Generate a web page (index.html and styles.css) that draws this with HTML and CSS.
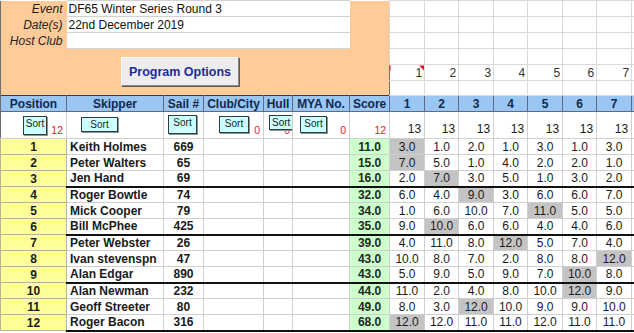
FILE: index.html
```html
<!DOCTYPE html>
<html lang="en">
<head>
    <meta charset="UTF-8">
    <meta name="viewport" content="width=device-width, initial-scale=1.0">
    <title>DF65 Winter Series Round 3 - Results</title>
    <link rel="stylesheet" href="styles.css">
</head>
<body>
    <table class="sheet">
        <colgroup>
            <col class="c-pos">
            <col class="c-skip">
            <col class="c-sail">
            <col class="c-club">
            <col class="c-hull">
            <col class="c-mya">
            <col class="c-score">
            <col class="c-r35"><col class="c-r34"><col class="c-r35"><col class="c-r34">
            <col class="c-r35"><col class="c-r34"><col class="c-r35">
            <col class="c-extra">
        </colgroup>

        <!-- event details -->
        <tr class="top">
            <td class="lbl">Event</td>
            <td class="val" colspan="5">DF65 Winter Series Round 3</td>
            <td class="org"></td>
            <td class="g"></td><td class="g"></td><td class="g"></td><td class="g"></td><td class="g"></td><td class="g"></td><td class="g"></td><td class="g"></td>
        </tr>
        <tr class="top">
            <td class="lbl">Date(s)</td>
            <td class="val" colspan="5">22nd December 2019</td>
            <td class="org"></td>
            <td class="g"></td><td class="g"></td><td class="g"></td><td class="g"></td><td class="g"></td><td class="g"></td><td class="g"></td><td class="g"></td>
        </tr>
        <tr class="top">
            <td class="lbl">Host Club</td>
            <td class="val" colspan="5"></td>
            <td class="org"></td>
            <td class="g"></td><td class="g"></td><td class="g"></td><td class="g"></td><td class="g"></td><td class="g"></td><td class="g"></td><td class="g"></td>
        </tr>
        <tr class="top">
            <td class="opts" colspan="7" rowspan="3"><button class="prog">Program Options</button></td>
            <td class="g"></td><td class="g"></td><td class="g"></td><td class="g"></td><td class="g"></td><td class="g"></td><td class="g"></td><td class="g"></td>
        </tr>
        <tr class="top">
            <td class="g num note">1</td><td class="g num">2</td><td class="g num">3</td><td class="g num">4</td><td class="g num">5</td><td class="g num">6</td><td class="g num">7</td><td class="g num"></td>
        </tr>
        <tr class="top last">
            <td class="g"></td><td class="g"></td><td class="g"></td><td class="g"></td><td class="g"></td><td class="g"></td><td class="g"></td><td class="g"></td>
        </tr>

        <!-- column headers -->
        <tr class="head">
            <th>Position</th>
            <th>Skipper</th>
            <th>Sail #</th>
            <th>Club/City</th>
            <th>Hull</th>
            <th>MYA No.</th>
            <th>Score</th>
            <th>1</th><th>2</th><th>3</th><th>4</th><th>5</th><th>6</th><th>7</th>
            <th></th>
        </tr>

        <!-- sort buttons and counts -->
        <tr class="sorts">
            <td><div class="sortbox"><span class="cnt">12</span><span class="sbtn sb-pos">Sort</span></div></td>
            <td><div class="sortbox"><span class="sbtn sb-skip">Sort</span></div></td>
            <td><div class="sortbox"><span class="sbtn sb-sail">Sort</span></div></td>
            <td><div class="sortbox"><span class="cnt">0</span><span class="sbtn sb-club">Sort</span></div></td>
            <td><div class="sortbox"><span class="cnt">0</span><span class="sbtn sb-hull">Sort</span></div></td>
            <td><div class="sortbox"><span class="cnt">0</span><span class="sbtn sb-mya">Sort</span></div></td>
            <td><div class="sortbox"><span class="cnt">12</span></div></td>
            <td class="races">13</td><td class="races">13</td><td class="races">13</td><td class="races">13</td>
            <td class="races">13</td><td class="races">13</td><td class="races">13</td>
            <td></td>
        </tr>

        <!-- results -->
        <tr>
            <td class="pos">1</td><td class="name">Keith Holmes</td><td class="sail">669</td><td></td><td></td><td></td><td class="score">11.0</td>
            <td class="d">3.0</td><td>1.0</td><td>2.0</td><td>1.0</td><td>3.0</td><td>1.0</td><td>3.0</td><td></td>
        </tr>
        <tr>
            <td class="pos">2</td><td class="name">Peter Walters</td><td class="sail">65</td><td></td><td></td><td></td><td class="score">15.0</td>
            <td class="d">7.0</td><td>5.0</td><td>1.0</td><td>4.0</td><td>2.0</td><td>2.0</td><td>1.0</td><td></td>
        </tr>
        <tr class="end">
            <td class="pos">3</td><td class="name">Jen Hand</td><td class="sail">69</td><td></td><td></td><td></td><td class="score">16.0</td>
            <td>2.0</td><td class="d">7.0</td><td>3.0</td><td>5.0</td><td>1.0</td><td>3.0</td><td>2.0</td><td></td>
        </tr>
        <tr>
            <td class="pos">4</td><td class="name">Roger Bowtle</td><td class="sail">74</td><td></td><td></td><td></td><td class="score">32.0</td>
            <td>6.0</td><td>4.0</td><td class="d">9.0</td><td>3.0</td><td>6.0</td><td>6.0</td><td>7.0</td><td></td>
        </tr>
        <tr>
            <td class="pos">5</td><td class="name">Mick Cooper</td><td class="sail">79</td><td></td><td></td><td></td><td class="score">34.0</td>
            <td>1.0</td><td>6.0</td><td>10.0</td><td>7.0</td><td class="d">11.0</td><td>5.0</td><td>5.0</td><td></td>
        </tr>
        <tr class="end">
            <td class="pos">6</td><td class="name">Bill McPhee</td><td class="sail">425</td><td></td><td></td><td></td><td class="score">35.0</td>
            <td>9.0</td><td class="d">10.0</td><td>6.0</td><td>6.0</td><td>4.0</td><td>4.0</td><td>6.0</td><td></td>
        </tr>
        <tr>
            <td class="pos">7</td><td class="name">Peter Webster</td><td class="sail">26</td><td></td><td></td><td></td><td class="score">39.0</td>
            <td>4.0</td><td>11.0</td><td>8.0</td><td class="d">12.0</td><td>5.0</td><td>7.0</td><td>4.0</td><td></td>
        </tr>
        <tr>
            <td class="pos">8</td><td class="name">Ivan stevenspn</td><td class="sail">47</td><td></td><td></td><td></td><td class="score">43.0</td>
            <td>10.0</td><td>8.0</td><td>7.0</td><td>2.0</td><td>8.0</td><td>8.0</td><td class="d">12.0</td><td></td>
        </tr>
        <tr class="end">
            <td class="pos">9</td><td class="name">Alan Edgar</td><td class="sail">890</td><td></td><td></td><td></td><td class="score">43.0</td>
            <td>5.0</td><td>9.0</td><td>5.0</td><td>9.0</td><td>7.0</td><td class="d">10.0</td><td>8.0</td><td></td>
        </tr>
        <tr>
            <td class="pos">10</td><td class="name">Alan Newman</td><td class="sail">232</td><td></td><td></td><td></td><td class="score">44.0</td>
            <td>11.0</td><td>2.0</td><td>4.0</td><td>8.0</td><td>10.0</td><td class="d">12.0</td><td>9.0</td><td></td>
        </tr>
        <tr>
            <td class="pos">11</td><td class="name">Geoff Streeter</td><td class="sail">80</td><td></td><td></td><td></td><td class="score">49.0</td>
            <td>8.0</td><td>3.0</td><td class="d">12.0</td><td>10.0</td><td>9.0</td><td>9.0</td><td>10.0</td><td></td>
        </tr>
        <tr class="end">
            <td class="pos">12</td><td class="name">Roger Bacon</td><td class="sail">316</td><td></td><td></td><td></td><td class="score">68.0</td>
            <td class="d">12.0</td><td>12.0</td><td>11.0</td><td>11.0</td><td>12.0</td><td>11.0</td><td>11.0</td><td></td>
        </tr>
    </table>
</body>
</html>
```

FILE: styles.css
```css
* {
    margin: 0;
    padding: 0;
    box-sizing: border-box;
}
body {
    overflow: hidden;
    background: #fff;
    font-family: "Liberation Sans", Arial, sans-serif;
    font-size: 12px;
    color: #1a1a1a;
}

/* spreadsheet grid */
.sheet {
    border-collapse: collapse;
    table-layout: fixed;
    width: 634px;
}
.c-pos { width: 66px; }
.c-skip { width: 97px; }
.c-sail { width: 40px; }
.c-club { width: 60px; }
.c-hull { width: 29px; }
.c-mya { width: 57px; }
.c-score { width: 40px; }
.c-r35 { width: 35px; }
.c-r34 { width: 34px; }
.c-extra { width: 3px; }

.sheet td,
.sheet th {
    height: 16px;
    padding: 0 2px;
    line-height: 14px;
    white-space: nowrap;
    overflow: hidden;
    border: 1px solid #cfcfcf;
    text-align: center;
}
.sheet tr > :first-child {
    border-left: 1px solid #6e6e6e;
}

/* top block with event details */
.top td {
    border: none;
}
.top.last td {
    height: 15px;
}
.top .lbl {
    background: #ffcc99;
    font-style: italic;
    text-align: right;
    padding-right: 4px;
    color: #222;
}
.top .val {
    background: #fff;
    text-align: left;
    color: #111;
    border-top: 1px solid #d2d2d2;
    border-bottom: 1px solid #d2d2d2;
}
.top .org,
.top .opts {
    background: #ffcc99;
}
.top .opts {
    vertical-align: top;
    text-align: left;
    padding: 0;
}
.top .g {
    border: 1px solid #dadada;
}
.top .num {
    text-align: right;
    vertical-align: bottom;
    padding-right: 2px;
    color: #333;
}
.top .note {
    /* comment marker in the corner */
    background: linear-gradient(225deg, #e01010 0 4px, transparent 4px);
}

.prog {
    display: block;
    margin: 8px 0 0 120px;
    width: 118px;
    height: 29px;
    background: #ededed;
    border: 1px solid;
    border-color: #fff #8a8a8a #8a8a8a #fff;
    box-shadow: 1px 1px 0 #5a5a5a;
    font-family: "Liberation Sans", Arial, sans-serif;
    font-weight: bold;
    font-size: 12.5px;
    color: #1f2a9e;
}

/* header row */
.head th {
    background: #99c6f3;
    color: #14284c;
    font-weight: bold;
    border: 1px solid #5d6c86;
    border-top: 1px solid #3a3a3a;
}

/* sort row */
.sorts td {
    height: 27px;
    padding: 0;
    vertical-align: top;
    border-top: 1px solid #9aa6b8;
}
.sortbox {
    display: grid;
    height: 26px;
}
.sortbox > * {
    grid-area: 1 / 1;
}
.cnt {
    justify-self: end;
    align-self: end;
    margin: 0 3px 3px 0;
    font-size: 10.5px;
    line-height: 10px;
    color: #e02424;
}
.sbtn {
    justify-self: start;
    align-self: start;
    background: #ccffff;
    border: 1px solid #2f3c3c;
    box-shadow: 1px 1px 0 #8a9696;
    font-size: 10px;
    line-height: 13px;
    color: #222;
    text-align: center;
    overflow: hidden;
}
.sb-pos { margin: 4px 0 0 22px; width: 24px; height: 19px; }
.sb-skip { margin: 5px 0 0 14px; width: 37px; height: 15px; }
.sb-sail { margin: 3px 0 0 4px; width: 29px; height: 19px; }
.sb-club { margin: 4px 0 0 15px; width: 30px; height: 17px; }
.sb-hull { margin: 3px 0 0 5px; width: 24px; height: 15px; text-align: left; padding-left: 2px; }
.sb-mya { margin: 4px 0 0 7px; width: 27px; height: 17px; }
.sorts .races {
    vertical-align: bottom;
    text-align: right;
    padding: 0 3px 2px 0;
    color: #1a1a1a;
}

/* results rows */
.pos {
    background: #ffff99;
    font-weight: bold;
    border-color: #b4b49a !important;
}
.name {
    font-weight: bold;
    text-align: left !important;
    padding-left: 3px !important;
}
.sail {
    font-weight: bold;
}
.score {
    background: #ccffcc;
    font-weight: bold;
    color: #1c2a1c;
}
.d {
    background: #c4c4c4;
}
.end td {
    border-bottom: 2px solid #111;
}
.end td.pos {
    border-bottom: 1px solid #b4b49a;
}
```
